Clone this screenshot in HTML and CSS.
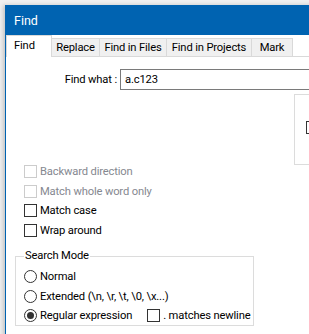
FILE: index.html
```html
<!DOCTYPE html>
<html lang="en">

<head>
    <meta charset="UTF-8">
    <title>Find</title>
    <link rel="stylesheet" href="styles.css">
</head>

<body>

    <div class="window">
        <div class="titlebar">Find</div>

        <div class="tabs">
            <div class="tab active">Find</div>
            <div class="tab tab-replace">Replace</div>
            <div class="tab tab-files">Find in Files</div>
            <div class="tab tab-projects">Find in Projects</div>
            <div class="tab tab-mark">Mark</div>
        </div>

        <div class="page">
            <div class="find-row">
                <label class="find-label">Find what :</label>
                <div class="find-input">a.c123</div>
            </div>

            <div class="side-row">
                <div class="side-group">
                    <span class="box side-box"></span>
                </div>
            </div>

            <div class="options">
                <div class="opt disabled"><span class="box"></span>Backward direction</div>
                <div class="opt disabled"><span class="box"></span>Match whole word only</div>
                <div class="opt"><span class="box"></span>Match case</div>
                <div class="opt"><span class="box"></span>Wrap around</div>
            </div>

            <fieldset class="mode">
                <legend>Search Mode</legend>
                <div class="opt"><span class="radio"></span>Normal</div>
                <div class="opt"><span class="radio"></span>Extended (\n, \r, \t, \0, \x...)</div>
                <div class="opt">
                    <span class="radio checked"></span>Regular expression
                    <span class="box newline-box"></span>. matches newline
                </div>
            </fieldset>
        </div>
    </div>

</body>

</html>
```

FILE: styles.css
```css
body {
    margin: 0;
    background: #f0f0f0;
    font-family: Roboto, "Noto Sans", sans-serif;
    font-size: 11.2px;
    letter-spacing: -0.15px;
    color: #000;
    overflow: hidden;
    width: 309px;
    height: 334px;
}

.window {
    margin: 5px 0 0 5px;
    width: 320px;
    height: 340px;
    background: #fff;
    border-left: 1px solid #0063b1;
    box-shadow: -2px 0 4px rgba(0, 0, 0, 0.18);
}

.titlebar {
    height: 30px;
    line-height: 31px;
    padding-left: 8px;
    background: #0063b1;
    color: #fff;
    font-size: 12.5px;
    letter-spacing: 0;
}

/* tab strip */
.tabs {
    display: flex;
    align-items: flex-end;
    height: 22px;
    box-shadow: inset 0 -1px #d9d9d9;
}

.tab {
    box-sizing: border-box;
    flex: none;
    height: 18px;
    margin: 0 0 1px -1px;
    line-height: 18px;
    text-align: center;
    background: #f0f0f0;
    border: 1px solid #d9d9d9;
    border-bottom: none;
    white-space: nowrap;
}

.tab.active {
    height: 22px;
    width: 46px;
    margin: 0;
    padding-left: 7px;
    text-align: left;
    line-height: 19px;
    background: #fff;
}

.tab-replace { width: 49px; }
.tab-files { width: 68px; }
.tab-projects { width: 86px; }
.tab-mark { width: 42px; }

/* find what */
.find-row {
    display: flex;
    align-items: center;
    gap: 3px;
    margin-top: 12px;
}

.find-label {
    flex: none;
    width: 111px;
    text-align: right;
    white-space: nowrap;
}

.find-input {
    flex: none;
    box-sizing: border-box;
    width: 200px;
    height: 21px;
    padding-left: 4px;
    line-height: 19px;
    border: 1px solid #7a7a7a;
}

.side-row {
    display: flex;
    margin-top: 4px;
    padding-left: 288px;
}

.side-group {
    box-sizing: border-box;
    width: 30px;
    height: 71px;
    border: 1px solid #dcdcdc;
    padding: 26px 0 0 11px;
}

/* options */
.options {
    margin-top: -3px;
    padding-left: 18px;
}

.opt {
    display: flex;
    align-items: center;
    height: 19.5px;
    white-space: nowrap;
}

.opt.disabled {
    color: #858890;
}

.box {
    box-sizing: border-box;
    width: 13px;
    height: 13px;
    margin-right: 3px;
    border: 1px solid #333;
    background: #fff;
    flex: none;
}

.disabled .box {
    border-color: #cccccc;
}

.side-box {
    display: block;
}

.newline-box {
    margin-left: 15px;
}

/* search mode */
.mode {
    width: 239px;
    min-width: 0;
    box-sizing: border-box;
    margin: 8px 0 0 9px;
    padding: 3px 0 0 8px;
    border: 1px solid #dcdcdc;
    height: 78px;
}

.mode legend {
    padding: 0 1px;
    line-height: 16px;
}

.radio {
    box-sizing: border-box;
    width: 13px;
    height: 13px;
    margin-right: 3px;
    border: 1px solid #333;
    border-radius: 50%;
    background: #fff;
    flex: none;
    display: flex;
    align-items: center;
    justify-content: center;
}

.radio.checked::after {
    content: "";
    width: 7px;
    height: 7px;
    border-radius: 50%;
    background: #333;
}
```
